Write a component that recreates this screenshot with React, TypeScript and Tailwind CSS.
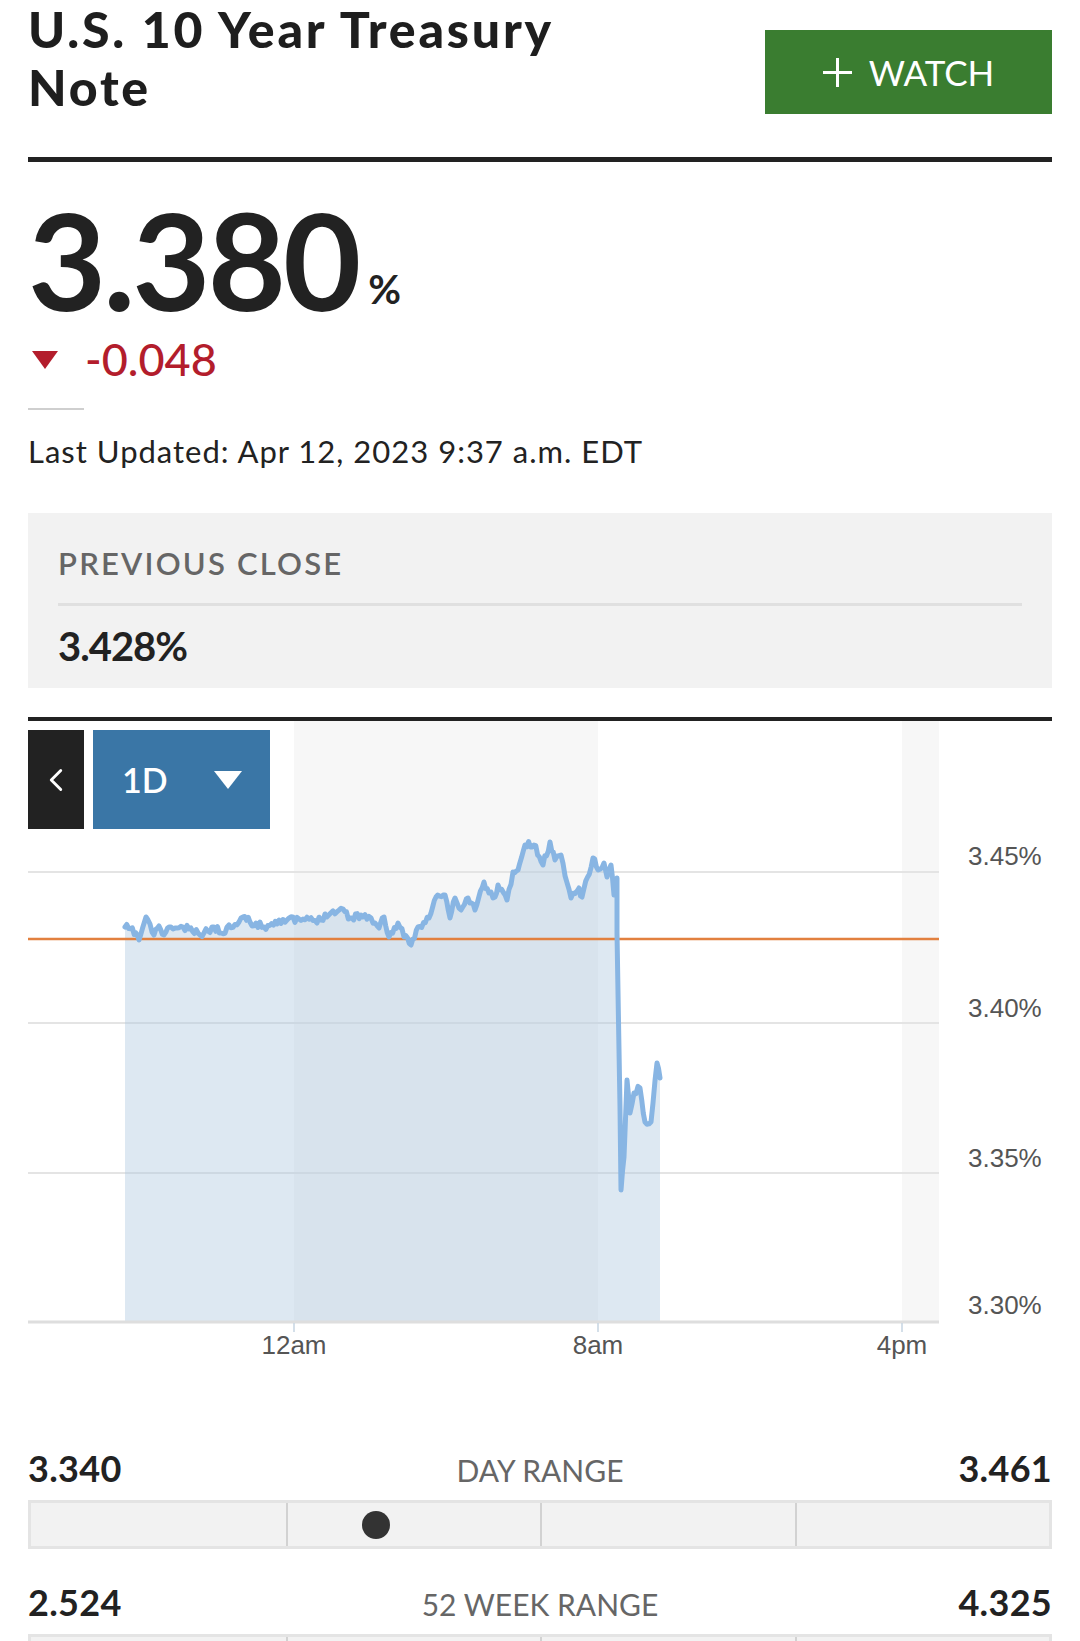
import { ChevronLeft } from 'lucide-react'

// key points of the intraday line, in chart coords (x from plot left, y from chart top)
const KEY_POINTS: [number, number][] = [
  [97, 206], [108, 212], [111, 219], [118, 196], [126, 214], [131, 205], [136, 214],
  [143, 206], [161, 208], [172, 214], [186, 206], [193, 212], [215, 196], [222, 201],
  [236, 206], [251, 199], [293, 199], [297, 193], [315, 188], [322, 197], [333, 194],
  [343, 197], [351, 207], [356, 196], [361, 216], [370, 202], [376, 216], [383, 224],
  [390, 206], [401, 197], [408, 176], [417, 174], [422, 197], [427, 177], [433, 189],
  [440, 177], [447, 189], [456, 161], [461, 172], [467, 176], [470, 164], [479, 179],
  [485, 151], [490, 149], [497, 124], [506, 124], [515, 144], [522, 121], [527, 139],
  [533, 134], [543, 177], [551, 167], [554, 176], [565, 137], [570, 149], [576, 142],
  [579, 156], [583, 144], [586, 174], [589, 157], [589, 212], [592, 386], [593, 469],
  [596, 436], [599, 359], [602, 392], [606, 372], [612, 367], [617, 401], [623, 401],
  [625, 382], [629, 342], [632, 357],
]

const PLOT_W = 911
const AXIS_Y = 601

function jagged(points: [number, number][]) {
  let seed = 11
  const rand = () => {
    seed = (seed * 16807) % 2147483647
    return seed / 2147483647
  }
  const out: [number, number][] = []
  for (let i = 0; i < points.length - 1; i++) {
    const [x1, y1] = points[i]
    const [x2, y2] = points[i + 1]
    const steps = Math.max(1, Math.round((x2 - x1) / 2))
    for (let s = 0; s < steps; s++) {
      const t = s / steps
      const noise = s === 0 ? 0 : (rand() - 0.5) * 7
      out.push([x1 + (x2 - x1) * t, y1 + (y2 - y1) * t + noise])
    }
  }
  out.push(points[points.length - 1])
  return out
}

function Chart() {
  const pts = jagged(KEY_POINTS)
  const line = pts.map(([x, y], i) => `${i ? 'L' : 'M'}${x.toFixed(1)} ${y.toFixed(1)}`).join(' ')
  const first = pts[0]
  const last = pts[pts.length - 1]
  const area = `${line} L${last[0]} ${AXIS_Y} L${first[0]} ${AXIS_Y} Z`
  const grid = [151, 302, 452]
  const yLabels: [string, number][] = [['3.45%', 144], ['3.40%', 296], ['3.35%', 446], ['3.30%', 593]]
  const xLabels: [string, number][] = [['12am', 266], ['8am', 570], ['4pm', 874]]

  return (
    <div className="relative mt-[29px] border-t-[4px] border-[#222]">
      <svg width={1024} height={650} className="block">
        <rect x={266} y={0} width={304} height={AXIS_Y} fill="#f7f7f7" />
        <rect x={874} y={0} width={PLOT_W - 874} height={AXIS_Y} fill="#f7f7f7" />
        {grid.map((y) => (
          <line key={y} x1={0} x2={PLOT_W} y1={y} y2={y} stroke="#e4e4e4" strokeWidth={2} />
        ))}
        <path d={area} fill="#a9c6df" fillOpacity={0.4} />
        <line x1={0} x2={PLOT_W} y1={218} y2={218} stroke="#e2803f" strokeWidth={2.5} />
        <path d={line} fill="none" stroke="#88b5e3" strokeWidth={5} strokeLinejoin="round" strokeLinecap="round" />
        <line x1={0} x2={PLOT_W} y1={AXIS_Y} y2={AXIS_Y} stroke="#dedede" strokeWidth={3} />
        {xLabels.map(([t, x]) => (
          <g key={t}>
            <line x1={x} x2={x} y1={AXIS_Y + 1} y2={AXIS_Y + 10} stroke="#c6d5e2" strokeWidth={1.5} />
            <text x={x} y={633} textAnchor="middle" fontSize={26} fill="#555" fontFamily="'Liberation Sans', Arial, sans-serif">
              {t}
            </text>
          </g>
        ))}
        {yLabels.map(([t, y]) => (
          <text key={t} x={940} y={y} fontSize={26} fill="#555" fontFamily="'Liberation Sans', Arial, sans-serif">
            {t}
          </text>
        ))}
      </svg>

      <div className="absolute left-0 top-[9px] flex gap-[9px]">
        <button className="flex h-[99px] w-[56px] items-center justify-center bg-[#222] text-white">
          <ChevronLeft size={38} strokeWidth={1.8} />
        </button>
        <button className="flex h-[99px] w-[177px] items-center justify-between bg-[#3a76a6] pl-[29px] pr-[28px] text-[34px] font-semibold text-white">
          <span className="leading-none">1D</span>
          <svg width={28} height={18} viewBox="0 0 28 18">
            <polygon points="0,0 28,0 14,18" fill="#fff" />
          </svg>
        </button>
      </div>
    </div>
  )
}

function RangeRow({ low, label, high, current, className = '' }: { low: number; label: string; high: number; current: number; className?: string }) {
  const pct = ((current - low) / (high - low)) * 100
  return (
    <div className={className}>
      <div className="grid grid-cols-[1fr_auto_1fr] items-baseline">
        <span className="text-[36px] font-bold leading-[34px] tracking-[0.3px] text-[#222]">{low.toFixed(3)}</span>
        <span className="text-[30px] leading-[34px] text-[#666]">{label}</span>
        <span className="text-right text-[36px] font-bold leading-[34px] tracking-[0.3px] text-[#222]">{high.toFixed(3)}</span>
      </div>
      <div className="relative mt-[13px] grid h-[49px] grid-cols-4 border-[3px] border-[#e4e4e4] bg-[#f2f2f2]">
        <div />
        <div className="border-l-2 border-[#d2d2d2]" />
        <div className="border-l-2 border-[#d2d2d2]" />
        <div className="border-l-2 border-[#d2d2d2]" />
        <div
          className="absolute top-1/2 h-[28px] w-[28px] -translate-x-1/2 -translate-y-1/2 rounded-full bg-[#333]"
          style={{ left: `calc(${pct}% + 8px)` }}
        />
      </div>
    </div>
  )
}

export default function App() {
  return (
    <div className="w-[1080px] bg-white px-[28px] font-[family-name:Lato,sans-serif] text-[#222]">
      <header className="flex items-start justify-between">
        <h1 className="w-[620px] text-[50px] font-black leading-[58px] tracking-[2.8px] text-[#1e1e1e]">
          U.S. 10 Year Treasury Note
        </h1>
        <button className="mt-[30px] flex h-[84px] w-[287px] shrink-0 items-center justify-center gap-[17px] bg-[#3a7d30] text-[35px] text-white">
          <svg width={29} height={29} viewBox="0 0 29 29">
            <path d="M14.5 0 V29 M0 14.5 H29" stroke="#fff" strokeWidth={3} />
          </svg>
          <span className="leading-none">WATCH</span>
        </button>
      </header>

      <div className="mt-[41px] border-t-[5px] border-[#222]" />

      <div className="mt-[30px] flex items-baseline">
        <span className="text-[135px] font-bold leading-[135px] tracking-[-3px]">3.380</span>
        <span className="ml-[10px] -translate-y-[7px] text-[40px] font-bold leading-none">%</span>
      </div>

      <div className="mt-[10px] flex items-center gap-[27px] pl-[4px] text-[#b31d2c]">
        <svg width={26} height={18} viewBox="0 0 26 18">
          <polygon points="0,0 26,0 13,18" fill="#b31d2c" />
        </svg>
        <span className="text-[45px] font-medium leading-[45px]">-0.048</span>
      </div>

      <div className="mt-[26px] h-[2px] w-[56px] bg-[#cfcfcf]" />

      <p className="mt-[26px] text-[31px] leading-[30px] tracking-[1px] text-[#222]">Last Updated: Apr 12, 2023 9:37 a.m. EDT</p>

      <section className="mt-[47px] bg-[#f2f2f2] px-[30px] pb-[22px] pt-[35px]">
        <h2 className="text-[31px] font-semibold leading-[30px] tracking-[2.2px] text-[#666]">PREVIOUS CLOSE</h2>
        <div className="mt-[25px] h-[3px] bg-[#e0e0e0]" />
        <div className="mt-[20px] text-[40px] font-bold leading-[40px] tracking-[-1px] text-[#222]">3.428%</div>
      </section>

      <Chart />

      <RangeRow className="mt-[80px]" low={3.34} label="DAY RANGE" high={3.461} current={3.38} />
      <RangeRow className="mt-[36px] pb-[30px]" low={2.524} label="52 WEEK RANGE" high={4.325} current={3.38} />
    </div>
  )
}
